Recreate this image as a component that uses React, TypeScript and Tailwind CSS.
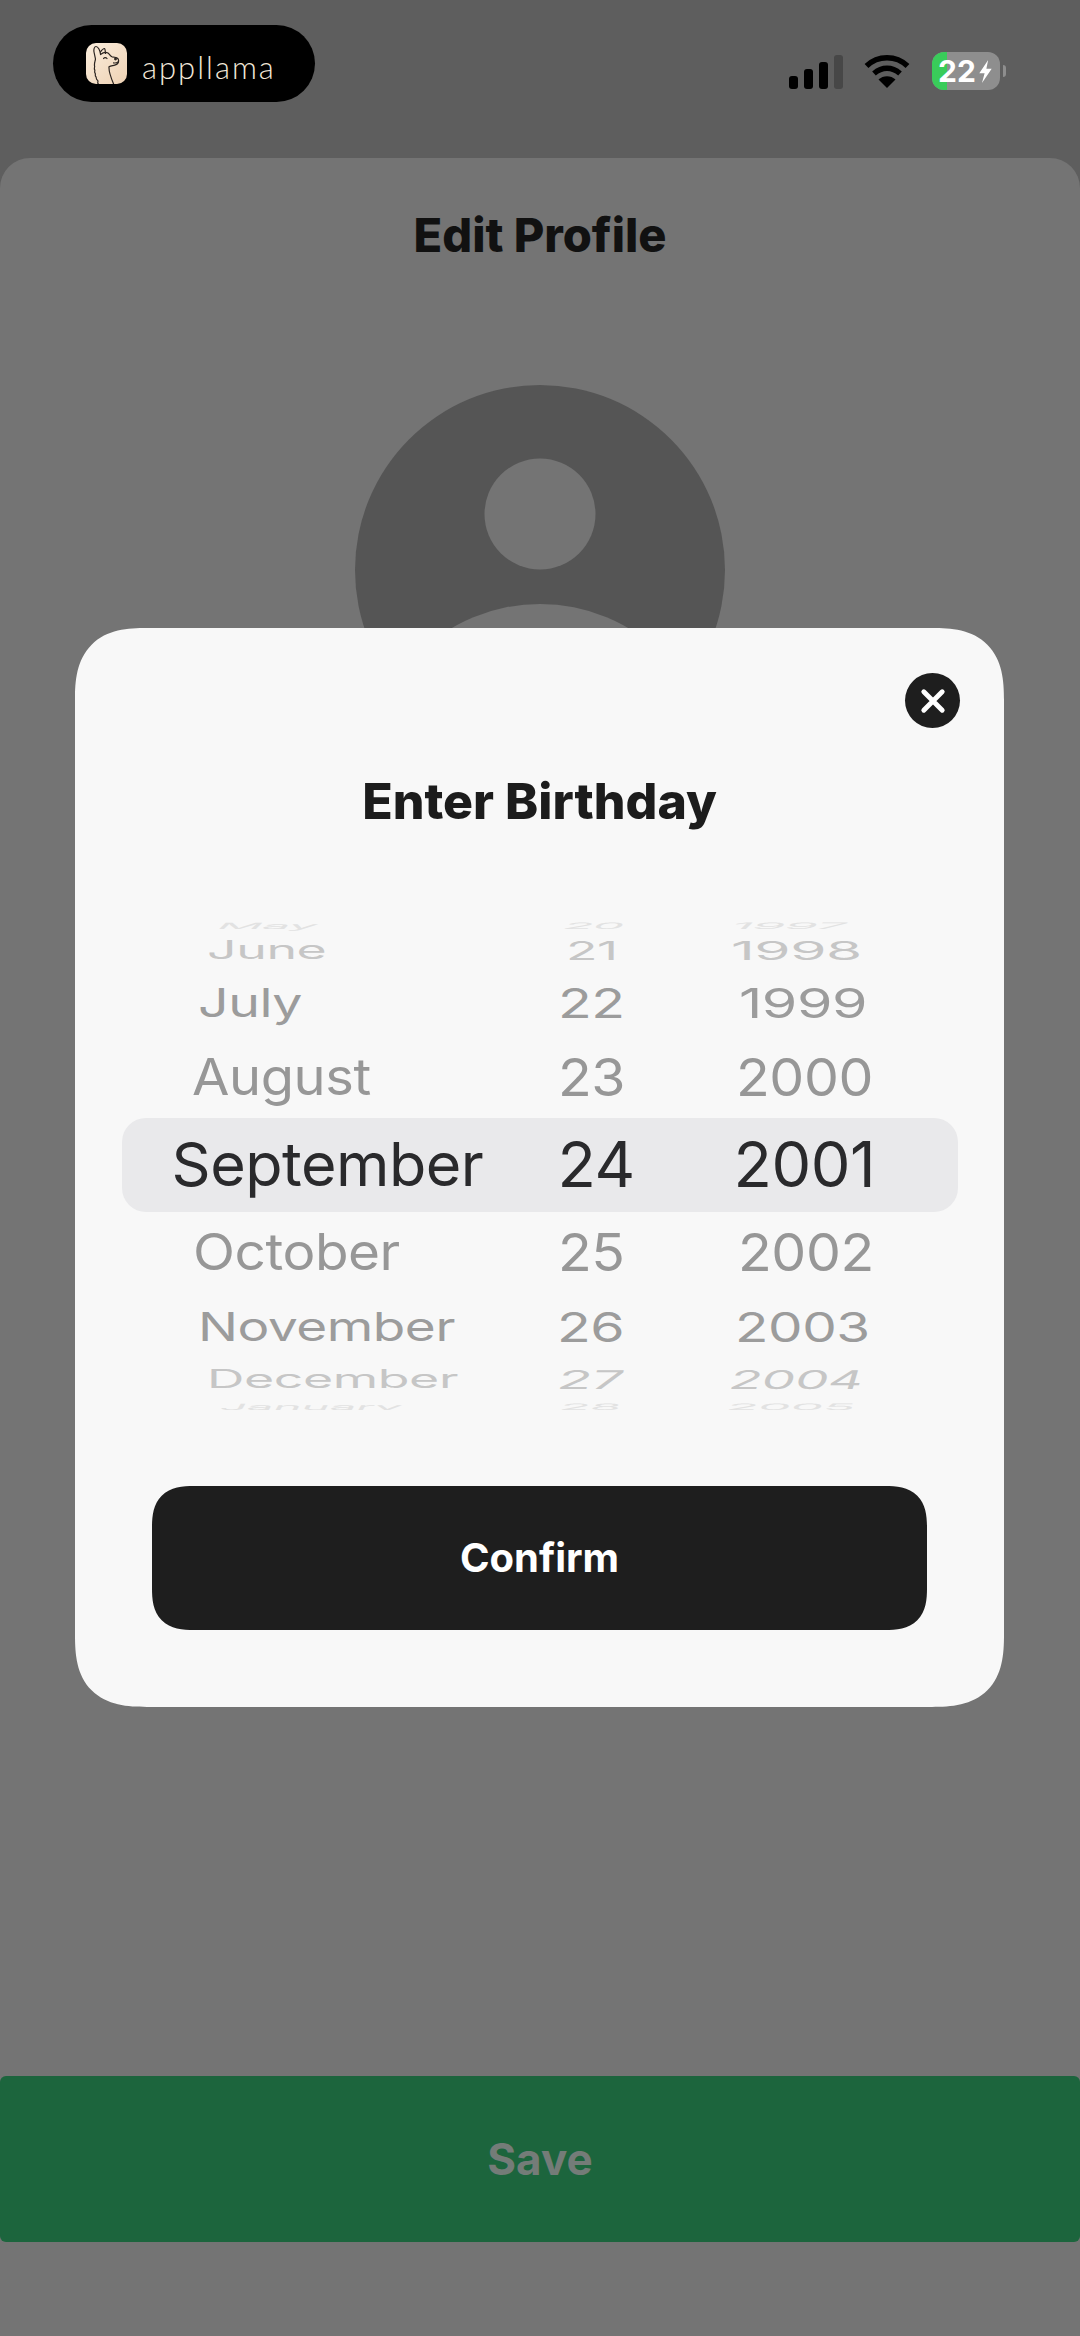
import React from "react";

type Row = { t: string; pl: string; sx: string };

const rowStyles = [
  { h: "h-[24px]", c: "text-[#e2e2e2] scale-y-[0.14] skew-x-[-10deg]" },
  { h: "h-[26px]", c: "text-[#c6c6c6] scale-y-[0.41]" },
  { h: "h-[80px]", c: "text-[#9c9c9c] scale-y-[0.65]" },
  { h: "h-[69px]", c: "text-[#979797] scale-y-[0.83]" },
  { h: "h-[104px]", c: "text-[#2a2a2c]" },
  { h: "h-[72px]", c: "text-[#979797] scale-y-[0.83]" },
  { h: "h-[78px]", c: "text-[#9c9c9c] scale-y-[0.65]" },
  { h: "h-[27px]", c: "text-[#c6c6c6] scale-y-[0.41]" },
  { h: "h-[26px]", c: "text-[#e2e2e2] scale-y-[0.14] skew-x-[-6deg]" },
];

const months: Row[] = [
  { t: "May", pl: "pl-[96px]", sx: "scale-x-[0.82]" },
  { t: "June", pl: "pl-[85px]", sx: "scale-x-[0.85]" },
  { t: "July", pl: "pl-[76px]", sx: "scale-x-[0.88]" },
  { t: "August", pl: "pl-[70px]", sx: "scale-x-[0.89]" },
  { t: "September", pl: "pl-[50px]", sx: "scale-x-100" },
  { t: "October", pl: "pl-[71px]", sx: "scale-x-[0.9]" },
  { t: "November", pl: "pl-[76px]", sx: "scale-x-[0.87]" },
  { t: "December", pl: "pl-[85px]", sx: "scale-x-[0.85]" },
  { t: "January", pl: "pl-[98px]", sx: "scale-x-[0.79]" },
];
const days: Row[] = [
  { t: "20", pl: "pl-[42px]", sx: "scale-x-[0.78]" },
  { t: "21", pl: "pl-[44px]", sx: "scale-x-[0.82]" },
  { t: "22", pl: "pl-[36px]", sx: "scale-x-[0.88]" },
  { t: "23", pl: "pl-[36px]", sx: "scale-x-[0.88]" },
  { t: "24", pl: "pl-[36px]", sx: "scale-x-100" },
  { t: "25", pl: "pl-[36px]", sx: "scale-x-[0.88]" },
  { t: "26", pl: "pl-[35px]", sx: "scale-x-[0.88]" },
  { t: "27", pl: "pl-[36px]", sx: "scale-x-[0.9] skew-x-[-6deg]" },
  { t: "28", pl: "pl-[38px]", sx: "scale-x-[0.8]" },
];
const years: Row[] = [
  { t: "1997", pl: "pl-[30px]", sx: "scale-x-[0.84]" },
  { t: "1998", pl: "pl-[29px]", sx: "scale-x-[0.93]" },
  { t: "1999", pl: "pl-[37px]", sx: "scale-x-[0.91]" },
  { t: "2000", pl: "pl-[34px]", sx: "scale-x-[0.88]" },
  { t: "2001", pl: "pl-[32px]", sx: "scale-x-100" },
  { t: "2002", pl: "pl-[36px]", sx: "scale-x-[0.88]" },
  { t: "2003", pl: "pl-[33px]", sx: "scale-x-[0.87]" },
  { t: "2004", pl: "pl-[28px]", sx: "scale-x-[0.85] skew-x-[-8deg]" },
  { t: "2005", pl: "pl-[25px]", sx: "scale-x-[0.83]" },
];

function Wheel({ rows, width, size }: { rows: Row[]; width: string; size: string }) {
  return (
    <div className={`${width} flex flex-col -mt-[7px]`}>
      {rows.map((r, i) => (
        <div key={r.t} className={`${rowStyles[i].h} ${r.pl} shrink-0 flex items-center`}>
          <span className={`block origin-left whitespace-nowrap ${size} leading-none font-normal tracking-[-0.5px] ${r.sx} ${rowStyles[i].c}`}>
            {r.t}
          </span>
        </div>
      ))}
    </div>
  );
}

function Llama() {
  return (
    <div className="w-[41px] h-[41px] rounded-[10px] bg-gradient-to-br from-[#fbeedd] to-[#eed2b4] overflow-hidden shrink-0">
      <svg viewBox="0 0 41 41" className="w-full h-full" fill="none" stroke="#2b2420" strokeWidth="1.2" strokeLinecap="round" strokeLinejoin="round">
        <path d="M12.500 41c-2-1 .5-2.500-1-3.800-1.800-1-1-2.500-1.500-3.500-1.500-1 0-2.500-1-3.700-1-1 .5-2.500-.5-3.500-.5-1.500.5-2.500 0-3.800-.3-2.500.5-4 1-6.500L8 9c-.5-3 .5-5.500 2-5.500 2 0 4 3.500 4.500 7.500" />
        <path d="M14.500 9c1-1.500 3-3.500 4-3.500 1 .5.500 3 1 5" />
        <path d="M14.500 11.500c2.500-2 5.500-2.500 7.500-1.500 1.500 1 2 3 4 3.800 3 .2 6 .5 6.500 3 .5 3-1.500 5-4.500 5.500-2.500.5-3.500.5-5 1.500-.3 4 2 11 4.500 17" />
        <path d="M17.500 15.500c1-1.300 2.500-1.300 3.500 0" />
        <path d="M32 19c-1.500 1-3 1.200-4.500.8" />
        <circle cx="29.500" cy="16" r=".8" fill="#2b2420" />
      </svg>
    </div>
  );
}

function Wifi() {
  return (
    <svg viewBox="0 0 46 34" className="w-[46px] h-[34px]" fill="none" stroke="#000" strokeWidth="5.500">
      <path d="M2.500 12C14 1 32 1 43.500 12" />
      <path d="M10 19.500C18 12.500 28 12.500 36 19.500" />
      <path d="M23 34L14.500 25.500C19 21 27 21 31.500 25.500Z" fill="#000" stroke="none" />
    </svg>
  );
}

export default function App() {
  return (
    <div className="relative w-[1080px] h-[2336px] overflow-hidden flex flex-col bg-[#5e5e5e] font-['Inter',sans-serif]">
      {/* status bar */}
      <div className="h-[158px] shrink-0 flex items-start justify-between">
        <div className="mt-[25px] ml-[53px] w-[262px] h-[77px] rounded-full bg-black flex items-center pl-[33px]">
          <Llama />
          <span className="ml-[15px] mt-[7px] font-['Lato',sans-serif] font-light text-[31px] leading-none tracking-[2px] text-[#f3e8da]">appllama</span>
        </div>
        <div className="mt-[52px] mr-[74px] flex items-center">
          <div className="flex items-end gap-[6px] h-[36px]">
            <div className="w-[9px] h-[13px] rounded-[3px] bg-black" />
            <div className="w-[9px] h-[20px] rounded-[3px] bg-black" />
            <div className="w-[9px] h-[27px] rounded-[3px] bg-black" />
            <div className="w-[9px] h-[34px] rounded-[3px] bg-[#474747]" />
          </div>
          <div className="ml-[21px]"><Wifi /></div>
          <div className="ml-[22px] flex items-center">
            <div className="relative w-[68px] h-[38px] rounded-[12px] bg-[#8e8e8e] overflow-hidden flex items-center pl-[6px]">
              <div className="absolute left-0 top-0 bottom-0 w-[15px] bg-[#39cc5a]" />
              <span className="relative text-[30px] leading-none font-bold text-white">22</span>
              <svg viewBox="0 0 16 26" className="relative ml-[1px] w-[17px] h-[23px]" fill="#fff">
                <path d="M11 0 1 15h6L4 26 15 10H9z" />
              </svg>
            </div>
            <div className="ml-[3px] w-[3px] h-[12px] rounded-r-full bg-[#8e8e8e]" />
          </div>
        </div>
      </div>

      {/* sheet */}
      <div className="flex-1 bg-[#747474] rounded-t-[30px] flex flex-col items-center">
        <h1 className="mt-[51px] h-[50px] flex items-center text-[47px] leading-none font-extrabold text-[#111111]">Edit Profile</h1>
        <svg viewBox="0 0 370 370" className="mt-[126px] w-[370px] h-[370px]">
          <circle cx="185" cy="185" r="185" fill="#555555" />
          <circle cx="185" cy="129" r="55.500" fill="#747474" />
          <circle cx="185" cy="393" r="174" fill="#747474" />
        </svg>
        <button className="mt-auto mb-[94px] w-full h-[166px] rounded-[6px] bg-[#1c653d] text-[44px] font-bold text-[#747c78]">Save</button>
      </div>

      {/* modal */}
      <div className="absolute left-[75px] top-[628px] w-[929px] h-[1079px] rounded-[72px] [corner-shape:superellipse(1.4)] bg-[#f8f8f8] flex flex-col items-center">
        <button className="absolute top-[45px] right-[44px] w-[55px] h-[55px] rounded-full bg-[#1e1e1e] flex items-center justify-center">
          <svg viewBox="0 0 24 24" className="w-[26px] h-[26px]" fill="none" stroke="#fff" strokeWidth="4.500" strokeLinecap="round">
            <path d="M3.500 3.500 20.500 20.500M20.500 3.500 3.500 20.500" />
          </svg>
        </button>
        <h2 className="mt-[148px] h-[50px] flex items-center text-[50px] leading-none font-extrabold text-[#1c1c1c]">Enter Birthday</h2>
        <div className="relative mt-[94px] w-[836px] h-[490px] overflow-hidden flex">
          <div className="absolute left-0 right-0 top-[198px] h-[94px] rounded-[24px] bg-[#e9e9eb]" />
          <div className="relative flex items-start">
            <Wheel rows={months} width="w-[400px]" size="text-[61px]" />
            <Wheel rows={days} width="w-[180px]" size="text-[63px]" />
            <Wheel rows={years} width="w-[256px]" size="text-[63px]" />
          </div>
        </div>
        <button className="mt-[76px] w-[775px] h-[144px] rounded-[42px] [corner-shape:superellipse(1.4)] bg-[#1e1e1e] text-white text-[40px] font-bold">Confirm</button>
      </div>
    </div>
  );
}
